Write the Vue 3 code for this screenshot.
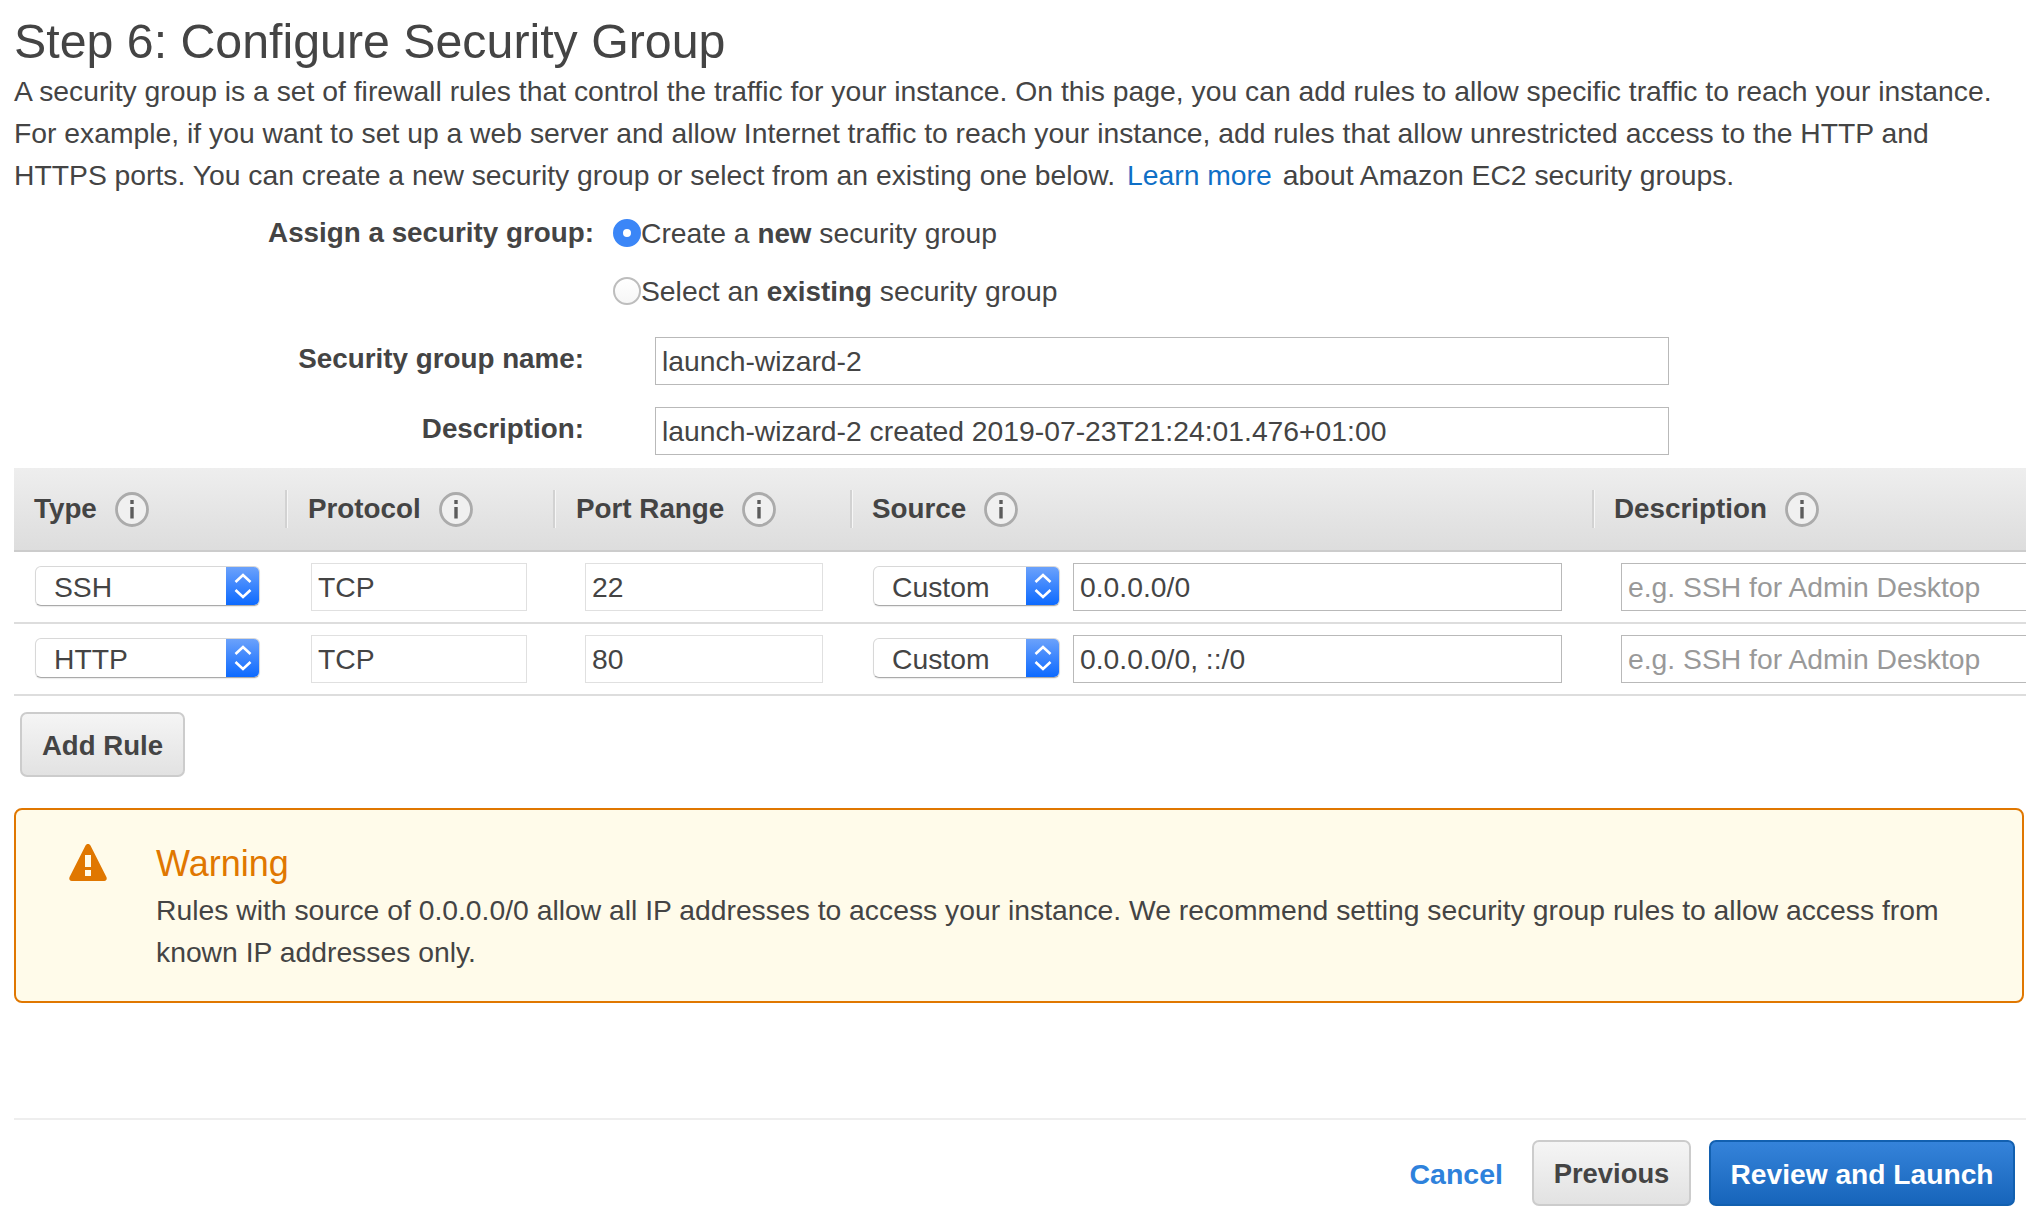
<script setup>
const columns = [
  { label: 'Type', cls: 'h-type' },
  { label: 'Protocol', cls: 'h-protocol' },
  { label: 'Port Range', cls: 'h-port' },
  { label: 'Source', cls: 'h-source' },
  { label: 'Description', cls: 'h-desc' }
]
const rules = [
  { type: 'SSH', protocol: 'TCP', port: '22', source: '0.0.0.0/0' },
  { type: 'HTTP', protocol: 'TCP', port: '80', source: '0.0.0.0/0, ::/0' }
]
</script>

<template>
  <div class="page">
    <h1>Step 6: Configure Security Group</h1>
    <p class="intro">
      A security group is a set of firewall rules that control the traffic for your instance. On this page, you can add rules to allow specific traffic to reach your instance.
      For example, if you want to set up a web server and allow Internet traffic to reach your instance, add rules that allow unrestricted access to the HTTP and
      HTTPS ports. You can create a new security group or select from an existing one below.<a class="learn">Learn more</a>about Amazon EC2 security groups.
    </p>

    <div class="assign">
      <div class="assign-label">Assign a security group:</div>
      <div class="assign-options">
        <div class="option"><span class="radio on"></span><span>Create a <b>new</b> security group</span></div>
        <div class="option"><span class="radio"></span><span>Select an <b>existing</b> security group</span></div>
      </div>
    </div>

    <div class="fields">
      <div class="field">
        <div class="field-label">Security group name:</div>
        <div class="input name-input">launch-wizard-2</div>
      </div>
      <div class="field">
        <div class="field-label">Description:</div>
        <div class="input name-input">launch-wizard-2 created 2019-07-23T21:24:01.476+01:00</div>
      </div>
    </div>

    <div class="thead">
      <div v-for="c in columns" :key="c.label" class="th" :class="c.cls">
        <span>{{ c.label }}</span>
        <svg class="info" viewBox="0 0 34 35" aria-hidden="true">
          <ellipse cx="17" cy="17.500" rx="15.500" ry="16" fill="#f0f0f0" stroke="#ababab" stroke-width="2.800" />
          <rect x="15.300" y="8" width="3.400" height="4" fill="#5c5c5c" />
          <rect x="15.300" y="15" width="3.400" height="11.500" fill="#5c5c5c" />
        </svg>
      </div>
    </div>

    <div v-for="r in rules" :key="r.type" class="row">
      <div class="cell c-type">
        <div class="select type-select">
          <span class="select-text">{{ r.type }}</span>
          <span class="select-btn">
            <svg viewBox="0 0 34 40" class="chev" aria-hidden="true">
              <path d="M9.500 16 L17 9 L24.500 16 M9.500 24 L17 31 L24.500 24" fill="none" stroke="#fff" stroke-width="2.600" />
            </svg>
          </span>
        </div>
      </div>
      <div class="cell c-protocol"><div class="input light protocol-input">{{ r.protocol }}</div></div>
      <div class="cell c-port"><div class="input light port-input">{{ r.port }}</div></div>
      <div class="cell c-source">
        <div class="select source-select">
          <span class="select-text">Custom</span>
          <span class="select-btn">
            <svg viewBox="0 0 34 40" class="chev" aria-hidden="true">
              <path d="M9.500 16 L17 9 L24.500 16 M9.500 24 L17 31 L24.500 24" fill="none" stroke="#fff" stroke-width="2.600" />
            </svg>
          </span>
        </div>
        <div class="input source-input">{{ r.source }}</div>
      </div>
      <div class="cell c-desc"><div class="input desc-input">e.g. SSH for Admin Desktop</div></div>
    </div>

    <button class="btn add-rule">Add Rule</button>

    <div class="warning">
      <svg class="warn-icon" viewBox="0 0 38 37" aria-hidden="true">
        <path fill-rule="evenodd" fill="#e07700" d="M19 0c1.200 0 2 .6 2.600 1.700L37.400 33c.9 1.900-.1 4-2.200 4H2.800C.7 37-.3 34.900.6 33L16.400 1.700C17 .6 17.800 0 19 0zM16 11v12h6V11h-6zm0 15v6h6v-6h-6z" />
      </svg>
      <div class="warn-body">
        <div class="warn-title">Warning</div>
        <div class="warn-text">Rules with source of 0.0.0.0/0 allow all IP addresses to access your instance. We recommend setting security group rules to allow access from known IP addresses only.</div>
      </div>
    </div>

    <div class="footer">
      <a class="cancel">Cancel</a>
      <button class="btn previous">Previous</button>
      <button class="btn primary">Review and Launch</button>
    </div>
  </div>
</template>

<style>
html, body { margin: 0; background: #fff; }
</style>

<style scoped>
.page {
  width: 2026px;
  height: 1216px;
  box-sizing: border-box;
  padding-left: 14px;
  overflow: hidden;
  font-family: "Liberation Sans", Arial, sans-serif;
  font-size: 28.3px;
  line-height: 42px;
  color: #444;
  background: #fff;
}
b { font-size: 27.8px; }
h1 {
  margin: 0;
  padding: 13px 0 1px;
  font-size: 48.3px;
  line-height: 56px;
  font-weight: 400;
  color: #444;
}
.intro { margin: 0; width: 2000px; }
.learn { color: #0f6fc6; margin: 0 11px 0 12px; }
.assign { display: flex; margin-top: 8px; }
.assign-label {
  width: 580px;
  height: 58px;
  line-height: 58px;
  text-align: right;
  font-weight: 700;
  font-size: 27.8px;
}
.assign-options { margin-left: 19px; }
.option { height: 58px; display: flex; align-items: center; }
.radio {
  width: 28px;
  height: 28px;
  box-sizing: border-box;
  border-radius: 50%;
  border: 2px solid #bdbdbd;
  background: linear-gradient(#fff, #f6f6f6);
  flex: none;
}
.radio.on {
  border: 10px solid #3b86f7;
  background: #fff;
}
.fields { margin-top: 17px; display: flex; flex-direction: column; gap: 22px; }
.field { display: flex; }
.field-label {
  width: 570px;
  padding-top: 1px;
  text-align: right;
  font-weight: 700;
  font-size: 27.8px;
  margin-right: 71px;
}
.input {
  box-sizing: border-box;
  height: 48px;
  line-height: 46px;
  border: 1px solid #b9b9b9;
  padding: 0 6px;
  background: #fff;
  white-space: nowrap;
}
.input.light { border-color: #e0e0e0; }
.name-input { width: 1014px; }
.thead {
  margin-top: 13px;
  height: 84px;
  box-sizing: border-box;
  border-bottom: 2px solid #ccc;
  background: linear-gradient(#eee, #ddd);
  display: grid;
  grid-template-columns: 271px 268px 297px 742px 1fr;
  align-items: center;
}
.th {
  height: 38px;
  line-height: 38px;
  display: flex;
  align-items: center;
  font-weight: 700;
  font-size: 27.8px;
  border-left: 2px solid #d2d2d2;
  box-shadow: inset 1px 0 0 #f6f6f6;
}
.h-type { border-left: 0; box-shadow: none; padding-left: 20px; }
.h-protocol { padding-left: 21px; }
.h-port { padding-left: 21px; }
.h-source { padding-left: 20px; }
.h-desc { padding-left: 20px; }
.info { width: 34px; height: 35px; margin-left: 18px; flex: none; }
.row {
  height: 72px;
  box-sizing: border-box;
  border-bottom: 2px solid #ddd;
  display: grid;
  grid-template-columns: 271px 268px 297px 742px 1fr;
  align-items: center;
}
.cell { display: flex; align-items: center; }
.select {
  box-sizing: border-box;
  height: 40px;
  margin-bottom: 2px;
  display: flex;
  justify-content: space-between;
  background: #fff;
  border-radius: 6px;
  border: 1px solid #d8d8d8;
  border-bottom-color: #aaa;
  box-shadow: 0 1px 1px rgba(0,0,0,.08);
  line-height: 40px;
  overflow: hidden;
}
.select-text { padding-left: 18px; }
.select-btn {
  width: 34px;
  margin: -1px -1px -1px 0;
  background: linear-gradient(#6ea3fb, #0a68ff);
  flex: none;
}
.chev { display: block; width: 34px; height: 40px; }
.c-type { padding-left: 21px; }
.type-select { width: 225px; }
.c-protocol { padding-left: 26px; }
.protocol-input { width: 216px; }
.c-port { padding-left: 32px; }
.port-input { width: 238px; }
.c-source { padding-left: 23px; }
.source-select { width: 187px; }
.source-input { width: 489px; margin-left: 13px; }
.c-desc { padding-left: 29px; }
.desc-input { width: 460px; color: #999; flex: none; }
.btn {
  display: block;
  box-sizing: border-box;
  height: 65px;
  padding: 0;
  border: 2px solid #ccc;
  border-radius: 7px;
  background: linear-gradient(#f5f5f5, #e2e2e2);
  font: 700 27.6px/63px "Liberation Sans", Arial, sans-serif;
  color: #444;
}
.add-rule { width: 165px; margin: 16px 0 0 6px; }
.warning {
  margin-top: 31px;
  width: 2010px;
  height: 195px;
  box-sizing: border-box;
  border: 2px solid #e07700;
  border-radius: 8px;
  background: #fffbea;
  display: flex;
}
.warn-icon { width: 38px; height: 37px; margin: 34px 0 0 53px; flex: none; }
.warn-body { margin-left: 49px; width: 1800px; padding-top: 30px; }
.warn-title { font-size: 36px; line-height: 48px; color: #e07700; }
.warn-text { margin-top: 1px; }
.footer {
  margin-top: 115px;
  border-top: 2px solid #eee;
  padding: 20px 11px 0 0;
  display: flex;
  justify-content: flex-end;
  align-items: center;
}
.cancel { color: #2e82dc; font-weight: 700; font-size: 28.5px; margin-right: 29px; padding-top: 2px; }
.previous { width: 159px; height: 66px; margin-right: 18px; font-size: 27.4px; line-height: 64px; }
.primary {
  width: 306px;
  height: 66px;
  border-color: #1260b0;
  background: linear-gradient(#3583da, #1765bb);
  color: #fff;
  font-size: 28.2px;
  line-height: 64px;
}
</style>
